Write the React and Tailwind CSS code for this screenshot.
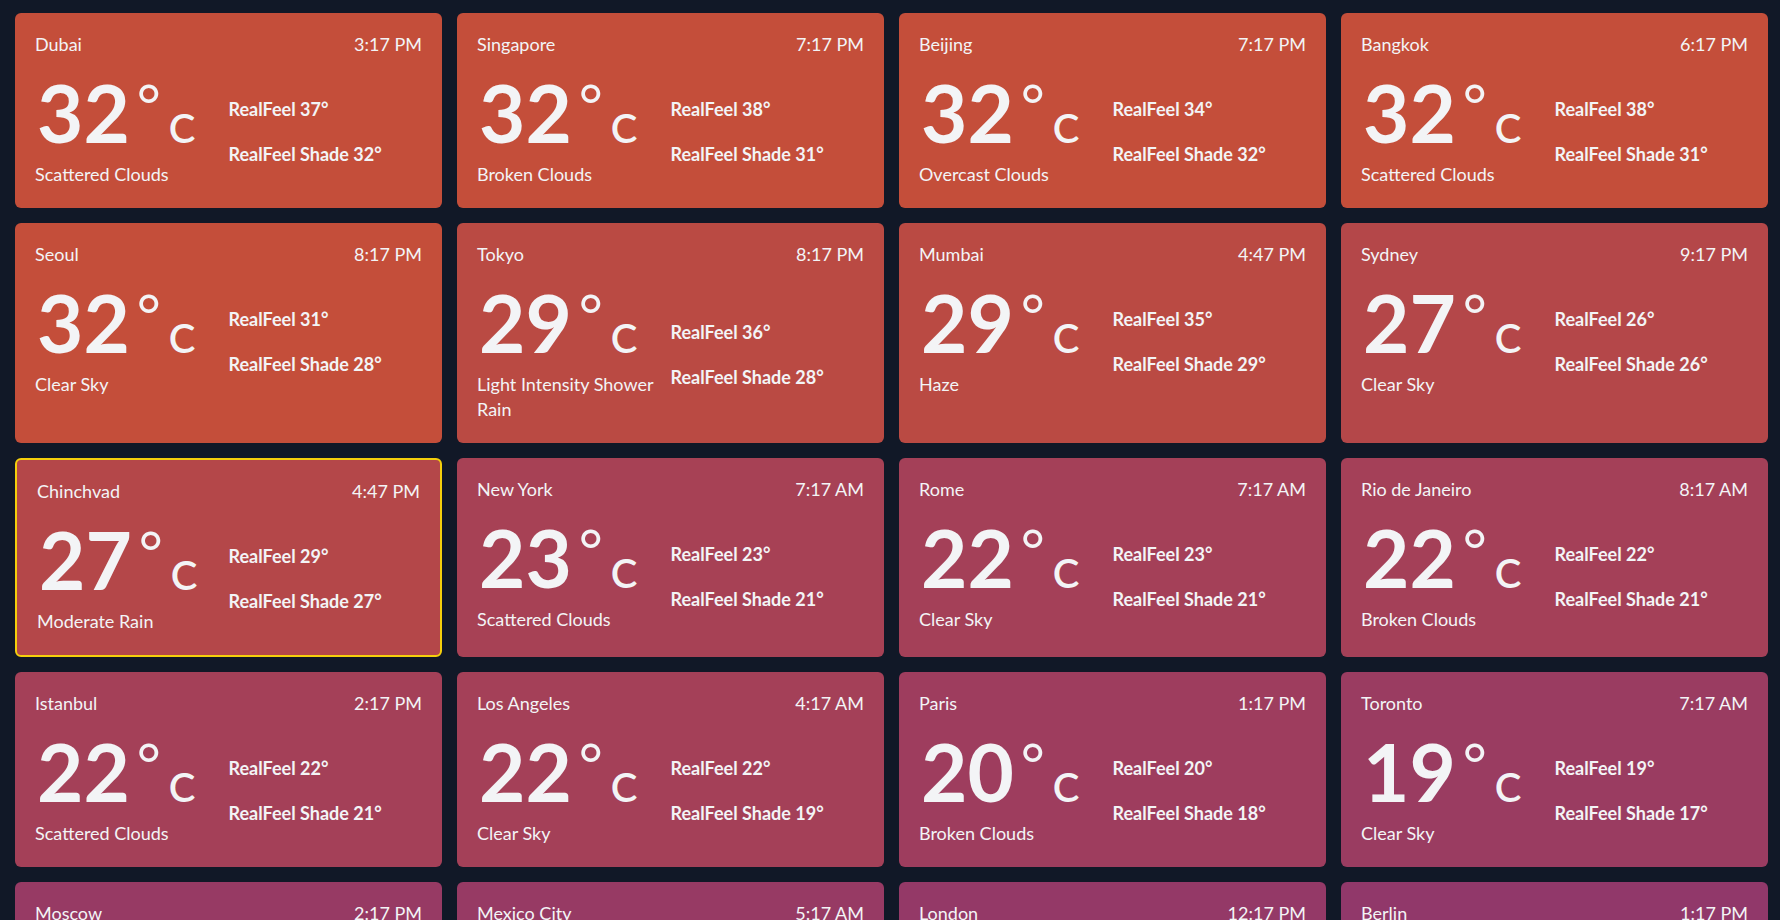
import React from 'react';

const cities = [
  { name: 'Dubai', time: '3:17 PM', temp: 32, feel: 37, shade: 32, desc: 'Scattered Clouds' },
  { name: 'Singapore', time: '7:17 PM', temp: 32, feel: 38, shade: 31, desc: 'Broken Clouds' },
  { name: 'Beijing', time: '7:17 PM', temp: 32, feel: 34, shade: 32, desc: 'Overcast Clouds' },
  { name: 'Bangkok', time: '6:17 PM', temp: 32, feel: 38, shade: 31, desc: 'Scattered Clouds' },
  { name: 'Seoul', time: '8:17 PM', temp: 32, feel: 31, shade: 28, desc: 'Clear Sky' },
  { name: 'Tokyo', time: '8:17 PM', temp: 29, feel: 36, shade: 28, desc: 'Light Intensity Shower Rain' },
  { name: 'Mumbai', time: '4:47 PM', temp: 29, feel: 35, shade: 29, desc: 'Haze' },
  { name: 'Sydney', time: '9:17 PM', temp: 27, feel: 26, shade: 26, desc: 'Clear Sky' },
  { name: 'Chinchvad', time: '4:47 PM', temp: 27, feel: 29, shade: 27, desc: 'Moderate Rain', current: true },
  { name: 'New York', time: '7:17 AM', temp: 23, feel: 23, shade: 21, desc: 'Scattered Clouds' },
  { name: 'Rome', time: '7:17 AM', temp: 22, feel: 23, shade: 21, desc: 'Clear Sky' },
  { name: 'Rio de Janeiro', time: '8:17 AM', temp: 22, feel: 22, shade: 21, desc: 'Broken Clouds' },
  { name: 'Istanbul', time: '2:17 PM', temp: 22, feel: 22, shade: 21, desc: 'Scattered Clouds' },
  { name: 'Los Angeles', time: '4:17 AM', temp: 22, feel: 22, shade: 19, desc: 'Clear Sky' },
  { name: 'Paris', time: '1:17 PM', temp: 20, feel: 20, shade: 18, desc: 'Broken Clouds' },
  { name: 'Toronto', time: '7:17 AM', temp: 19, feel: 19, shade: 17, desc: 'Clear Sky' },
  { name: 'Moscow', time: '2:17 PM', temp: 18, feel: 17, shade: 16, desc: 'Clear Sky' },
  { name: 'Mexico City', time: '5:17 AM', temp: 18, feel: 17, shade: 16, desc: 'Clear Sky' },
  { name: 'London', time: '12:17 PM', temp: 17, feel: 17, shade: 15, desc: 'Broken Clouds' },
  { name: 'Berlin', time: '1:17 PM', temp: 16, feel: 16, shade: 14, desc: 'Clear Sky' },
];

// warm -> cool, linear on temperature
const tempColor = (t) => {
  const d = 32 - t;
  const r = Math.round(196 - 3.2 * d);
  const g = Math.round(78 - 1.4 * d);
  const b = Math.round(58 + 3 * d);
  return `rgb(${r}, ${g}, ${b})`;
};

const CityCard = ({ city }) => (
  <div
    className={`rounded-md px-5 pt-5 pb-[21px] text-gray-100 ${city.current ? 'border-2 border-[#f5cf0c]' : ''}`}
    style={{ backgroundColor: tempColor(city.temp) }}
  >
    <div className="flex justify-between text-[18px] leading-[22px]">
      <span>{city.name}</span>
      <span>{city.time}</span>
    </div>
    <div className="mt-[17px] grid grid-cols-2 items-center">
      <div>
        <div className="mb-[10px] flex items-baseline leading-none">
          <span className="pl-[2px] text-[80px] font-bold">{city.temp}</span>
          <span className="ml-[7px] mt-[4px] self-start text-[58px] leading-none">°</span>
          <span className="ml-[8px] text-[40px] font-semibold">C</span>
        </div>
        <p className="text-[18px] leading-[25px]">{city.desc}</p>
      </div>
      <div className="mt-[5px] flex flex-col gap-5 text-[18px] font-bold leading-[25px]">
        <span>RealFeel {city.feel}°</span>
        <span>RealFeel Shade {city.shade}°</span>
      </div>
    </div>
  </div>
);

export default function App() {
  return (
    <div className="h-screen overflow-hidden bg-[#111827] pt-[13px] pl-[15px] pr-[12px] font-['Lato',sans-serif]">
      <div className="grid grid-cols-4 gap-[15px]">
        {cities.map((c) => (
          <CityCard key={c.name} city={c} />
        ))}
      </div>
    </div>
  );
}
